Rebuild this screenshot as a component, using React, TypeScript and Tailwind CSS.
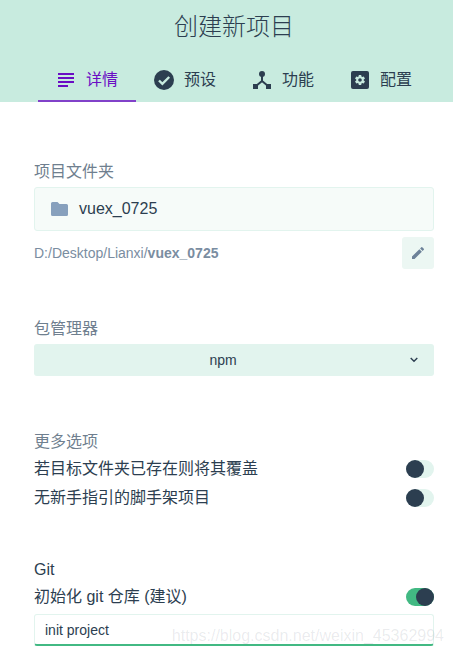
const font = { fontFamily: '"Liberation Sans", "Noto Sans CJK SC", sans-serif' };

function ListIcon() {
  return (
    <svg width="16" height="14" viewBox="0 0 16 14" fill="currentColor">
      <rect x="0" y="0" width="16" height="2" />
      <rect x="0" y="4" width="16" height="2" />
      <rect x="0" y="8" width="16" height="2" />
      <rect x="0" y="12" width="10" height="2" />
    </svg>
  );
}

function CheckIcon() {
  return (
    <svg width="20" height="20" viewBox="0 0 20 20">
      <circle cx="10" cy="10" r="10" fill="currentColor" />
      <path d="M5 10.5l3.4 3.4L15.2 7" fill="none" stroke="#c8ebdf" strokeWidth="2.4" />
    </svg>
  );
}

function TreeIcon() {
  return (
    <svg width="18" height="18" viewBox="0 0 18 18" fill="currentColor">
      <circle cx="9" cy="3" r="3" />
      <rect x="0" y="13" width="5" height="5" />
      <rect x="13" y="13" width="5" height="5" />
      <path d="M9 5v5L3 15M9 10l6 5" fill="none" stroke="currentColor" strokeWidth="2" />
    </svg>
  );
}

function GearIcon() {
  return (
    <svg width="18" height="18" viewBox="0 0 18 18">
      <rect width="18" height="18" rx="2" fill="currentColor" />
      <g transform="translate(3 3) scale(.5)">
        <path
          fill="#c8ebdf"
          d="M19.43 12.98c.04-.32.07-.64.07-.98s-.03-.66-.07-.98l2.11-1.65c.19-.15.24-.42.12-.64l-2-3.46c-.12-.22-.39-.3-.61-.22l-2.49 1c-.52-.4-1.08-.73-1.69-.98l-.38-2.65C14.46 2.18 14.25 2 14 2h-4c-.25 0-.46.18-.49.42l-.38 2.65c-.61.25-1.17.59-1.69.98l-2.49-1c-.23-.09-.49 0-.61.22l-2 3.46c-.13.22-.07.49.12.64l2.11 1.65c-.04.32-.07.65-.07.98s.03.66.07.98l-2.11 1.65c-.19.15-.24.42-.12.64l2 3.46c.12.22.39.3.61.22l2.49-1c.52.4 1.08.73 1.69.98l.38 2.65c.03.24.24.42.49.42h4c.25 0 .46-.18.49-.42l.38-2.65c.61-.25 1.17-.59 1.69-.98l2.49 1c.23.09.49 0 .61-.22l2-3.46c.12-.22.07-.49-.12-.64l-2.11-1.65zM12 15.5c-1.93 0-3.5-1.57-3.5-3.5s1.57-3.5 3.5-3.5 3.5 1.57 3.5 3.5-1.57 3.5-3.5 3.5z"
        />
      </g>
    </svg>
  );
}

function FolderIcon() {
  return (
    <svg width="17" height="14" viewBox="0 0 17 14" fill="#87a0bd">
      <path d="M1.5 0h5l2 2h7A1.5 1.5 0 0 1 17 3.5v9a1.5 1.5 0 0 1-1.5 1.5h-14A1.5 1.5 0 0 1 0 12.5v-11A1.5 1.5 0 0 1 1.5 0z" />
    </svg>
  );
}

function EditIcon() {
  return (
    <svg width="16" height="16" viewBox="0 0 24 24" fill="#6d8299">
      <path d="M3 17.25V21h3.75L17.81 9.94l-3.75-3.75L3 17.25zM20.71 7.04a1 1 0 0 0 0-1.41l-2.34-2.34a1 1 0 0 0-1.41 0l-1.83 1.83 3.75 3.75 1.83-1.83z" />
    </svg>
  );
}

function Toggle({ on = false }: { on?: boolean }) {
  return (
    <div
      className={`flex h-[18px] w-[28px] justify-end rounded-full ${on ? "bg-[#42b983]" : "flex-row-reverse bg-[#e2f4ee]"}`}
    >
      <div className="h-[18px] w-[18px] rounded-full bg-[#2c3e50]" />
    </div>
  );
}

const tabs = [
  { label: "详情", icon: <ListIcon />, active: true },
  { label: "预设", icon: <CheckIcon /> },
  { label: "功能", icon: <TreeIcon /> },
  { label: "配置", icon: <GearIcon /> },
];

export default function App() {
  return (
    <div className="h-[654px] w-[453px] overflow-hidden bg-white text-[#2c3e50]" style={font}>
      <header className="h-[102px] bg-[#c8ebdf]">
        {/* title and tabs are centred on 468px, the page is cut off at 453 */}
        <h1 className="h-[60px] w-[468px] pt-[10px] text-center text-[24px] leading-[34px] font-light text-[#2c3e50]">
          创建新项目
        </h1>
        <nav className="ml-[38px] flex h-[42px]">
          {tabs.map((t) => (
            <div
              key={t.label}
              className={`flex h-[42px] w-[98px] items-center gap-[10px] border-b-2 pl-[18px] text-[16px] ${
                t.active ? "border-[#8141c9] text-[#6a0dc4]" : "border-transparent text-[#2c3e50]"
              }`}
            >
              <span className="flex w-[20px] justify-center">{t.icon}</span>
              <span>{t.label}</span>
            </div>
          ))}
        </nav>
      </header>

      <main className="pr-[19px] pl-[34px]">
        <section className="pt-[59px]">
          <div className="h-[26px] text-[16px] leading-[22px] text-[#6f7f8f]">项目文件夹</div>
          <div className="flex h-[44px] items-center gap-[11px] rounded-[3px] border border-[#e2f4ee] bg-[#f6fbf9] pl-[16px] text-[16px]">
            <FolderIcon />
            <span>vuex_0725</span>
          </div>
          <div className="mt-[6px] flex h-[32px] items-center justify-between">
            <span className="text-[14px] text-[#7a8da1]">
              D:/Desktop/Lianxi/<b className="font-bold">vuex_0725</b>
            </span>
            <button className="flex h-[32px] w-[32px] items-center justify-center rounded-[3px] bg-[#ecf7f3]">
              <EditIcon />
            </button>
          </div>
        </section>

        <section className="pt-[49px]">
          <div className="h-[26px] text-[16px] leading-[22px] text-[#6f7f8f]">包管理器</div>
          <div className="relative flex h-[32px] items-center justify-center rounded-[3px] bg-[#e2f4ee] pr-[22px] text-[14px]">
            npm
            <svg
              className="absolute top-[13px] right-[16px]"
              width="8"
              height="6"
              viewBox="0 0 8 6"
              fill="none"
              stroke="#2c3e50"
              strokeWidth="1.4"
            >
              <path d="M.7 1l3.3 3.3L7.3 1" />
            </svg>
          </div>
        </section>

        <section className="pt-[55px]">
          <div className="h-[23px] text-[16px] leading-[22px] text-[#6f7f8f]">更多选项</div>
          <div className="flex h-[29px] items-center justify-between text-[16px]">
            <span>若目标文件夹已存在则将其覆盖</span>
            <Toggle />
          </div>
          <div className="flex h-[29px] items-center justify-between text-[16px]">
            <span>无新手指引的脚手架项目</span>
            <Toggle />
          </div>
        </section>

        <section className="pt-[47px]">
          <div className="h-[24px] text-[16px] leading-[22px]">Git</div>
          <div className="flex h-[28px] items-center justify-between text-[16px]">
            <span>初始化 git 仓库 (建议)</span>
            <Toggle on />
          </div>
          <div className="relative mt-[3px] flex h-[32px] items-center rounded-[3px] border border-[#e2f4ee] border-b-[2px] border-b-[#42b983] pt-[2px] pl-[10px] text-[14px]">
            init project
            <span className="absolute top-[9px] right-[-11px] text-[16px] whitespace-nowrap text-[#2c3e50]/10">
              https://blog.csdn.net/weixin_45362994
            </span>
          </div>
        </section>
      </main>
    </div>
  );
}
